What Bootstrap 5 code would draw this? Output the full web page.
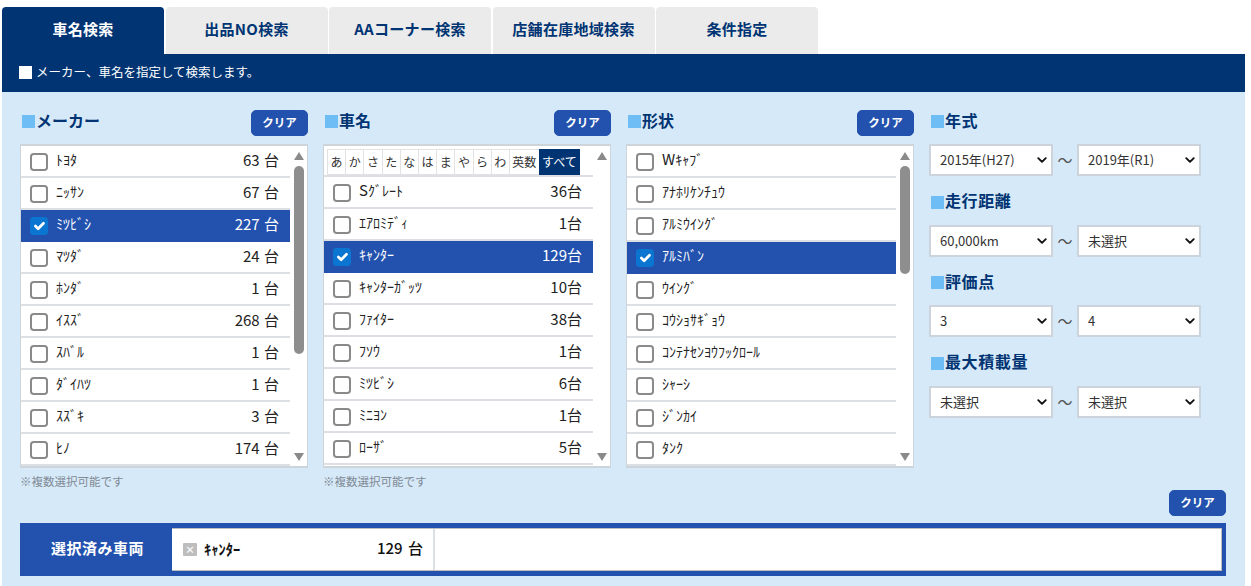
<!DOCTYPE html>
<html lang="ja"><head><meta charset="utf-8">
<link href="https://cdn.jsdelivr.net/npm/bootstrap@5.3.0/dist/css/bootstrap.min.css" rel="stylesheet">
<style>
body{font-family:"Noto Sans CJK JP","Noto Sans",sans-serif;background:#fff;color:#222;overflow:hidden}
.pg{padding:7px 6px 0 2px}
.tabbar{gap:1.5px}
.tabbar .nav-link{width:162px;height:47px;line-height:44px;padding:0;text-align:center;background:#ebebeb;color:#003473;font-weight:700;font-size:15px;letter-spacing:.3px;border-radius:4px 4px 0 0}
.tabbar .nav-link.active{background:#003473;color:#fff}
.infobar{height:38px;background:#003473;color:#fff;font-size:12.5px;padding:0 0 2px 17px}
.sq{width:13px;height:13px;background:#fff;margin-right:4px;flex:none}
.pane{background:#d6e9f9;padding:18px 19px 10px 18px;height:494px}
.cols{gap:15px}
.colbox{width:288px}
.coltail{width:272px;gap:14.5px}
.hd{height:26px;margin-bottom:8px}
.ttl{font-size:16px;font-weight:700;color:#003473;height:26px}
.ttl .sq{background:#6fbdf5;margin-left:2px;margin-right:1px;margin-top:-3px}
.ttltxt{display:block;line-height:20px;margin-top:-7px}
.coltail .ttltxt{letter-spacing:.6px}
.clr{width:57px;height:26px;padding:0 0 3px;background:#2352ae;border:1px solid #2352ae;border-radius:5px;color:#fff;font-size:11.5px;font-weight:700;line-height:22px}
.lst{height:324px;border:2px solid #cdd4da;border-left-width:1px;border-right-width:1px;background:#fff;overflow:hidden}
.rows{flex:1;min-width:0;border-radius:0}
.rw{height:32px;padding:0 11px 0 9px;border:0;border-bottom:2px solid #dcdfe3;border-radius:0!important;font-size:15px;color:#222;flex:none;margin:0;gap:8px}
.rw.on{background:#2352ae;color:#fff;border-color:#2352ae}
.kn{font-size:14px;font-weight:400;flex:1;line-height:20px;margin-top:-4px;white-space:nowrap}
.kn b{font-size:15px;font-weight:400}
.ct{white-space:nowrap;margin-top:-2px}
.lst1 .ct{word-spacing:1px}
.cb{width:18px;height:18px;margin:1px 0 0;flex:none;border:2px solid #8a8a8a;border-radius:3px;background-color:#fff}
.cb:checked{background-color:#0b76d1;border-color:#0b76d1;background-size:18px;background-position:center}
.sb{width:17px;flex:none;padding:6px 0 5px}
.up{width:0;height:0;border:5px solid transparent;border-top:0;border-bottom:8px solid #8a8a8a;margin:0 auto}
.dn{width:0;height:0;border:5px solid transparent;border-bottom:0;border-top:8px solid #8a8a8a;margin:0 auto}
.th{width:10px;margin:6px auto 0;background:#8e8e8e;border-radius:5px}
.th1{height:188px}.th3{height:108px}
.kana{height:31px;padding:3px 0 0 3px;border-bottom:2px solid #dcdfe3;flex:none;white-space:nowrap}
.kana span{width:19.2px;height:26px;line-height:24px;text-align:center;font-size:12px;border:1px solid #e2e2e2;margin-right:-1px;color:#333;background:#fff;flex:none}
.kana span.wide{width:31px}
.kana span.sel{width:41px;background:#003473;color:#fff;border-color:#003473}
.note{font-size:11.5px;color:#7f8a94;margin-top:5px;line-height:16px}
.tl{width:24px;text-align:center;font-size:15px;color:#555;line-height:32px;height:32px}
.sel2{width:124px;height:32px;padding:0 24px 0 9px;font-size:13px;border:2px solid #ccd3da;border-radius:0;color:#333;background-image:url("data:image/svg+xml,%3csvg xmlns='http://www.w3.org/2000/svg' viewBox='0 0 16 16'%3e%3cpath fill='none' stroke='%23111' stroke-linecap='round' stroke-linejoin='round' stroke-width='3' d='m2 5 6 6 6-6'/%3e%3c/svg%3e");background-position:right 4px center;background-size:10px 10px}
.after{height:26px;margin-top:1px;margin-bottom:7px;width:1206px}
.picked{width:1206px;height:53px;background:#2352ae;padding:5px 4px 5px 0}
.lbl{width:152px;color:#fff;font-weight:700;font-size:15px;letter-spacing:.5px;text-align:center;flex:none;padding:0 0 2px 3px}
.box{flex:1;background:#fff;border:1px solid #bdbdbd;border-width:1px 1px 1px 0}
.cell{width:263px;border-right:2px solid #dcdfe3;padding:0 10px 0 11px;gap:7px;font-weight:700}
.xx{width:14px;height:13px;background:#bdbdbd;color:#fff;font-size:10px;line-height:13px;text-align:center;border-radius:1px;flex:none}
.nm{flex:1;font-size:14.5px;color:#111;margin-top:-2px}
.qt{font-size:15px;color:#111;word-spacing:2px;font-weight:500;margin-top:-2px}
</style></head><body>
<div class="pg">
<ul class="nav tabbar">
<li class="nav-item"><a class="nav-link active" href="#">車名検索</a></li>
<li class="nav-item"><a class="nav-link" href="#">出品NO検索</a></li>
<li class="nav-item"><a class="nav-link" href="#">AAコーナー検索</a></li>
<li class="nav-item"><a class="nav-link" href="#">店舗在庫地域検索</a></li>
<li class="nav-item"><a class="nav-link" href="#">条件指定</a></li>
</ul>
<div class="infobar d-flex align-items-center"><span class="sq"></span>メーカー、車名を指定して検索します。</div>
<div class="pane">
<div class="d-flex cols">

<div class="colbox">
<div class="hd d-flex align-items-center justify-content-between"><div class="ttl d-flex align-items-center"><span class="sq"></span><span class="ttltxt">メーカー</span></div><button class="btn clr">クリア</button></div>
<div class="lst lst1 d-flex">
<div class="list-group rows">
<label class="list-group-item rw d-flex align-items-center"><input class="form-check-input cb" type="checkbox"><span class="kn">ﾄﾖﾀ</span><span class="ct">63 台</span></label>
<label class="list-group-item rw d-flex align-items-center"><input class="form-check-input cb" type="checkbox"><span class="kn">ﾆｯｻﾝ</span><span class="ct">67 台</span></label>
<label class="list-group-item rw on d-flex align-items-center"><input class="form-check-input cb" type="checkbox" checked><span class="kn">ﾐﾂﾋﾞｼ</span><span class="ct">227 台</span></label>
<label class="list-group-item rw d-flex align-items-center"><input class="form-check-input cb" type="checkbox"><span class="kn">ﾏﾂﾀﾞ</span><span class="ct">24 台</span></label>
<label class="list-group-item rw d-flex align-items-center"><input class="form-check-input cb" type="checkbox"><span class="kn">ﾎﾝﾀﾞ</span><span class="ct">1 台</span></label>
<label class="list-group-item rw d-flex align-items-center"><input class="form-check-input cb" type="checkbox"><span class="kn">ｲｽｽﾞ</span><span class="ct">268 台</span></label>
<label class="list-group-item rw d-flex align-items-center"><input class="form-check-input cb" type="checkbox"><span class="kn">ｽﾊﾞﾙ</span><span class="ct">1 台</span></label>
<label class="list-group-item rw d-flex align-items-center"><input class="form-check-input cb" type="checkbox"><span class="kn">ﾀﾞｲﾊﾂ</span><span class="ct">1 台</span></label>
<label class="list-group-item rw d-flex align-items-center"><input class="form-check-input cb" type="checkbox"><span class="kn">ｽｽﾞｷ</span><span class="ct">3 台</span></label>
<label class="list-group-item rw d-flex align-items-center"><input class="form-check-input cb" type="checkbox"><span class="kn">ﾋﾉ</span><span class="ct">174 台</span></label>
</div>
<div class="sb d-flex flex-column"><div class="up"></div><div class="th th1"></div><div class="dn mt-auto"></div></div>
</div>
<div class="note">※複数選択可能です</div>
</div>

<div class="colbox">
<div class="hd d-flex align-items-center justify-content-between"><div class="ttl d-flex align-items-center"><span class="sq"></span><span class="ttltxt">車名</span></div><button class="btn clr">クリア</button></div>
<div class="lst d-flex">
<div class="list-group rows">
<div class="kana d-flex"><span>あ</span><span>か</span><span>さ</span><span>た</span><span>な</span><span>は</span><span>ま</span><span>や</span><span>ら</span><span>わ</span><span class="wide">英数</span><span class="sel">すべて</span></div>
<label class="list-group-item rw d-flex align-items-center"><input class="form-check-input cb" type="checkbox"><span class="kn"><b>S</b>ｸﾞﾚｰﾄ</span><span class="ct">36台</span></label>
<label class="list-group-item rw d-flex align-items-center"><input class="form-check-input cb" type="checkbox"><span class="kn">ｴｱﾛﾐﾃﾞｨ</span><span class="ct">1台</span></label>
<label class="list-group-item rw on d-flex align-items-center"><input class="form-check-input cb" type="checkbox" checked><span class="kn">ｷｬﾝﾀｰ</span><span class="ct">129台</span></label>
<label class="list-group-item rw d-flex align-items-center"><input class="form-check-input cb" type="checkbox"><span class="kn">ｷｬﾝﾀｰｶﾞｯﾂ</span><span class="ct">10台</span></label>
<label class="list-group-item rw d-flex align-items-center"><input class="form-check-input cb" type="checkbox"><span class="kn">ﾌｧｲﾀｰ</span><span class="ct">38台</span></label>
<label class="list-group-item rw d-flex align-items-center"><input class="form-check-input cb" type="checkbox"><span class="kn">ﾌｿｳ</span><span class="ct">1台</span></label>
<label class="list-group-item rw d-flex align-items-center"><input class="form-check-input cb" type="checkbox"><span class="kn">ﾐﾂﾋﾞｼ</span><span class="ct">6台</span></label>
<label class="list-group-item rw d-flex align-items-center"><input class="form-check-input cb" type="checkbox"><span class="kn">ﾐﾆﾖﾝ</span><span class="ct">1台</span></label>
<label class="list-group-item rw d-flex align-items-center"><input class="form-check-input cb" type="checkbox"><span class="kn">ﾛｰｻﾞ</span><span class="ct">5台</span></label>
</div>
<div class="sb d-flex flex-column"><div class="up"></div><div class="dn mt-auto"></div></div>
</div>
<div class="note">※複数選択可能です</div>
</div>

<div class="colbox">
<div class="hd d-flex align-items-center justify-content-between"><div class="ttl d-flex align-items-center"><span class="sq"></span><span class="ttltxt">形状</span></div><button class="btn clr">クリア</button></div>
<div class="lst d-flex">
<div class="list-group rows">
<label class="list-group-item rw d-flex align-items-center"><input class="form-check-input cb" type="checkbox"><span class="kn"><b>W</b>ｷｬﾌﾞ</span></label>
<label class="list-group-item rw d-flex align-items-center"><input class="form-check-input cb" type="checkbox"><span class="kn">ｱﾅﾎﾘｹﾝﾁｭｳ</span></label>
<label class="list-group-item rw d-flex align-items-center"><input class="form-check-input cb" type="checkbox"><span class="kn">ｱﾙﾐｳｲﾝｸﾞ</span></label>
<label class="list-group-item rw on d-flex align-items-center"><input class="form-check-input cb" type="checkbox" checked><span class="kn">ｱﾙﾐﾊﾞﾝ</span></label>
<label class="list-group-item rw d-flex align-items-center"><input class="form-check-input cb" type="checkbox"><span class="kn">ｳｲﾝｸﾞ</span></label>
<label class="list-group-item rw d-flex align-items-center"><input class="form-check-input cb" type="checkbox"><span class="kn">ｺｳｼｮｻｷﾞｮｳ</span></label>
<label class="list-group-item rw d-flex align-items-center"><input class="form-check-input cb" type="checkbox"><span class="kn">ｺﾝﾃﾅｾﾝﾖｳﾌｯｸﾛｰﾙ</span></label>
<label class="list-group-item rw d-flex align-items-center"><input class="form-check-input cb" type="checkbox"><span class="kn">ｼｬｰｼ</span></label>
<label class="list-group-item rw d-flex align-items-center"><input class="form-check-input cb" type="checkbox"><span class="kn">ｼﾞﾝｶｲ</span></label>
<label class="list-group-item rw d-flex align-items-center"><input class="form-check-input cb" type="checkbox"><span class="kn">ﾀﾝｸ</span></label>
</div>
<div class="sb d-flex flex-column"><div class="up"></div><div class="th th3"></div><div class="dn mt-auto"></div></div>
</div>
</div>

<div class="coltail d-flex flex-column">
<div><div class="hd d-flex align-items-center"><div class="ttl d-flex align-items-center"><span class="sq"></span><span class="ttltxt">年式</span></div></div>
<div class="d-flex"><select class="form-select sel2"><option>2015年(H27)</option></select><span class="tl d-block">～</span><select class="form-select sel2"><option>2019年(R1)</option></select></div></div>
<div><div class="hd d-flex align-items-center"><div class="ttl d-flex align-items-center"><span class="sq"></span><span class="ttltxt">走行距離</span></div></div>
<div class="d-flex"><select class="form-select sel2"><option>60,000km</option></select><span class="tl d-block">～</span><select class="form-select sel2"><option>未選択</option></select></div></div>
<div><div class="hd d-flex align-items-center"><div class="ttl d-flex align-items-center"><span class="sq"></span><span class="ttltxt">評価点</span></div></div>
<div class="d-flex"><select class="form-select sel2"><option>3</option></select><span class="tl d-block">～</span><select class="form-select sel2"><option>4</option></select></div></div>
<div><div class="hd d-flex align-items-center"><div class="ttl d-flex align-items-center"><span class="sq"></span><span class="ttltxt">最大積載量</span></div></div>
<div class="d-flex"><select class="form-select sel2"><option>未選択</option></select><span class="tl d-block">～</span><select class="form-select sel2"><option>未選択</option></select></div></div>
</div>

</div>
<div class="after d-flex justify-content-end"><button class="btn clr">クリア</button></div>
<div class="picked d-flex align-items-stretch">
<div class="lbl d-flex align-items-center justify-content-center">選択済み車両</div>
<div class="box d-flex"><div class="cell d-flex align-items-center"><span class="xx">×</span><span class="nm">ｷｬﾝﾀｰ</span><span class="qt">129 台</span></div></div>
</div>
</div>
</div>
<script src="https://cdn.jsdelivr.net/npm/bootstrap@5.3.0/dist/js/bootstrap.bundle.min.js"></script>
</body></html>
